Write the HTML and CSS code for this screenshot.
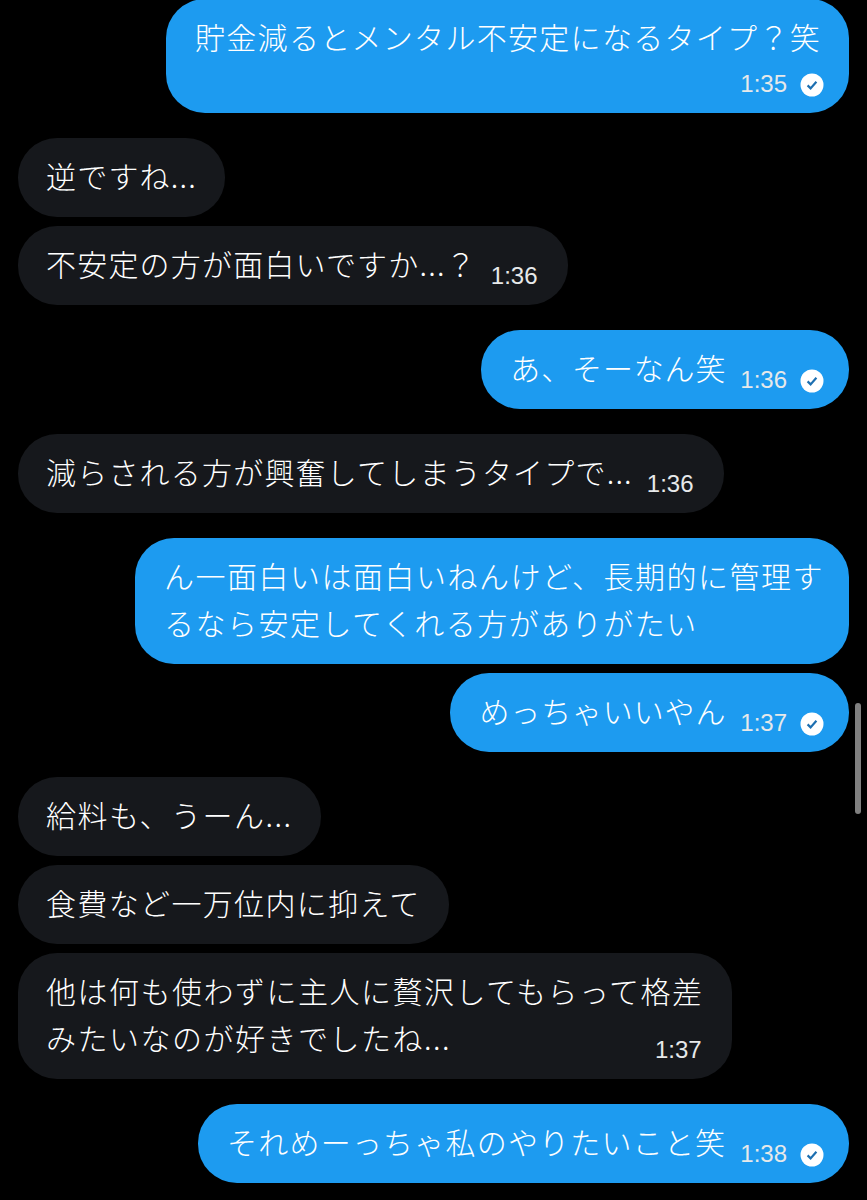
FILE: index.html
```html
<!DOCTYPE html>
<html lang="ja">
<head>
    <meta charset="UTF-8">
    <meta name="viewport" content="width=device-width, initial-scale=1.0">
    <title>Messages</title>
    <link rel="stylesheet" href="styles.css">
</head>
<body>
    <div class="chat">
        <div class="bubble sent stacked">
            <span class="text">貯金減るとメンタル不安定になるタイプ？笑</span>
            <span class="meta"><span class="time">1:35</span><svg class="check" viewBox="0 0 24 24"><circle cx="12" cy="12" r="11.5" fill="#fff"/><path d="M7.6 12.4l3 3 5.8-6.6" fill="none" stroke="#1d6fb0" stroke-width="2.2"/></svg></span>
        </div>

        <div class="bubble received group-start"><span class="text">逆ですね...</span></div>
        <div class="bubble received">
            <span class="text">不安定の方が面白いですか...？</span>
            <span class="meta"><span class="time">1:36</span></span>
        </div>

        <div class="bubble sent group-start">
            <span class="text tight">あ、そーなん笑</span>
            <span class="meta"><span class="time">1:36</span><svg class="check" viewBox="0 0 24 24"><circle cx="12" cy="12" r="11.5" fill="#fff"/><path d="M7.6 12.4l3 3 5.8-6.6" fill="none" stroke="#1d6fb0" stroke-width="2.2"/></svg></span>
        </div>

        <div class="bubble received group-start">
            <span class="text">減らされる方が興奮してしまうタイプで...</span>
            <span class="meta"><span class="time">1:36</span></span>
        </div>

        <div class="bubble sent group-start">
            <span class="text wide">ん一面白いは面白いねんけど、長期的に管理す<br>るなら安定してくれる方がありがたい</span>
        </div>
        <div class="bubble sent">
            <span class="text tight">めっちゃいいやん</span>
            <span class="meta"><span class="time">1:37</span><svg class="check" viewBox="0 0 24 24"><circle cx="12" cy="12" r="11.5" fill="#fff"/><path d="M7.6 12.4l3 3 5.8-6.6" fill="none" stroke="#1d6fb0" stroke-width="2.2"/></svg></span>
        </div>

        <div class="bubble received group-start"><span class="text wide">給料も、うーん...</span></div>
        <div class="bubble received"><span class="text roomy">食費など一万位内に抑えて</span></div>
        <div class="bubble received overlap">
            <span class="text wide">他は何も使わずに主人に贅沢してもらって格差<br>みたいなのが好きでしたね...</span>
            <span class="meta"><span class="time">1:37</span></span>
        </div>

        <div class="bubble sent group-start">
            <span class="text">それめーっちゃ私のやりたいこと笑</span>
            <span class="meta"><span class="time">1:38</span><svg class="check" viewBox="0 0 24 24"><circle cx="12" cy="12" r="11.5" fill="#fff"/><path d="M7.6 12.4l3 3 5.8-6.6" fill="none" stroke="#1d6fb0" stroke-width="2.2"/></svg></span>
        </div>
    </div>
    <div class="scrollbar"></div>
</body>
</html>
```

FILE: styles.css
```css
html, body {
    margin: 0;
    height: 1200px;
    overflow: hidden;
    background: #000;
}
body {
    position: relative;
    font-family: "Noto Sans CJK JP", sans-serif;
    color: #fff;
}
.chat {
    display: flex;
    flex-direction: column;
    align-items: flex-start;
    gap: 9px;
    margin-top: -1.5px;
    padding: 0 18px;
}
.bubble {
    display: flex;
    align-items: flex-end;
    gap: 14px;
    padding: 16px 28px;
    border-radius: 39px;
    font-size: 30px;
    line-height: 47px;
    letter-spacing: 1.2px;
    font-weight: 300;
}
.sent {
    align-self: flex-end;
    background: #1d9bf0;
    padding-left: 29px;
    padding-right: 25px;
}
.received {
    background: #16181c;
}
.received .meta {
    margin-right: 2px;
}
.group-start {
    margin-top: 16px;
}
.text {
    margin-top: -2px;
    margin-bottom: 2px;
}
.wide {
    letter-spacing: 1.5px;
}
.roomy {
    letter-spacing: 1.35px;
}
.tight {
    letter-spacing: 0.85px;
}
.stacked {
    flex-direction: column;
    align-items: flex-end;
    gap: 10.5px;
}
.stacked .text {
    margin-right: 3px;
    letter-spacing: 1.3px;
}
.overlap {
    flex-direction: column;
    align-items: flex-end;
    gap: 0;
}
.overlap .text {
    align-self: flex-start;
}
.overlap .meta {
    margin-top: -25px;
}
.meta {
    display: flex;
    align-items: center;
    gap: 13px;
    height: 25px;
    flex-shrink: 0;
}
.time {
    font-family: "Liberation Sans", sans-serif;
    font-size: 24px;
    line-height: 25px;
    letter-spacing: 0;
    font-weight: 400;
    color: #e7e9ea;
    margin-bottom: 2px;
}
.check {
    width: 24px;
    height: 24px;
}
.scrollbar {
    position: absolute;
    left: 855px;
    top: 703px;
    width: 6px;
    height: 111px;
    border-radius: 3px;
    background: #808080;
}
```
